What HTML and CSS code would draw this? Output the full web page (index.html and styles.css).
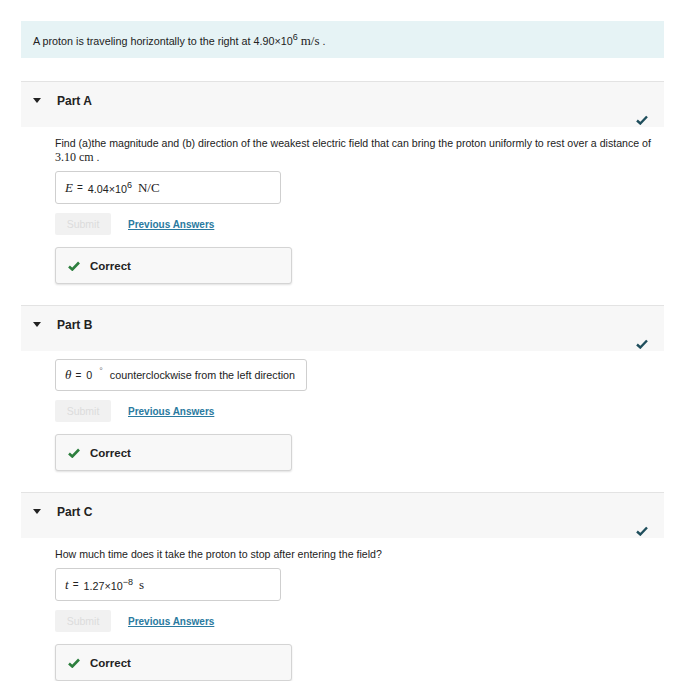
FILE: index.html
```html
<!DOCTYPE html>
<html>
<head>
<meta charset="utf-8">
<link rel="stylesheet" href="styles.css">
</head>
<body>
<div class="page">
  <div class="intro"><span>A proton is traveling horizontally to the right at 4.90×10<sup>6</sup>&nbsp;<span class="m">m/s</span> .</span></div>

  <section class="part">
    <div class="part-head">
      <span class="caret"></span><span class="part-title">Part A</span>
      <svg class="done" viewBox="0 0 12 10" width="12" height="10"><path d="M1 5.5 L4.3 8.5 L11 1.5" fill="none" stroke="#1f4e5c" stroke-width="2.4"/></svg>
    </div>
    <div class="part-body">
      <p class="q">Find (a)the magnitude and (b) direction of the weakest electric field that can bring the proton uniformly to rest over a distance of <span class="m qm">3.10 cm</span> .</p>
      <div class="answer a-short"><span class="mi">E</span><span class="eq">=</span><span>4.04×10<sup>6</sup></span><span class="m unit">N/C</span></div>
      <div class="actions"><span class="submit">Submit</span><a class="prev">Previous Answers</a></div>
      <div class="correct"><svg viewBox="0 0 12 10" width="12" height="10"><path d="M1 5.5 L4.3 8.5 L11 1.5" fill="none" stroke="#2d7f3e" stroke-width="2.6"/></svg><span>Correct</span></div>
    </div>
  </section>

  <section class="part">
    <div class="part-head">
      <span class="caret"></span><span class="part-title">Part B</span>
      <svg class="done" viewBox="0 0 12 10" width="12" height="10"><path d="M1 5.5 L4.3 8.5 L11 1.5" fill="none" stroke="#1f4e5c" stroke-width="2.4"/></svg>
    </div>
    <div class="part-body">
      <div class="answer a-wide"><span class="mi">θ</span><span class="eq">=</span><span>0</span><span class="deg">°</span><span>counterclockwise from the left direction</span></div>
      <div class="actions"><span class="submit">Submit</span><a class="prev">Previous Answers</a></div>
      <div class="correct"><svg viewBox="0 0 12 10" width="12" height="10"><path d="M1 5.5 L4.3 8.5 L11 1.5" fill="none" stroke="#2d7f3e" stroke-width="2.6"/></svg><span>Correct</span></div>
    </div>
  </section>

  <section class="part">
    <div class="part-head">
      <span class="caret"></span><span class="part-title">Part C</span>
      <svg class="done" viewBox="0 0 12 10" width="12" height="10"><path d="M1 5.5 L4.3 8.5 L11 1.5" fill="none" stroke="#1f4e5c" stroke-width="2.4"/></svg>
    </div>
    <div class="part-body">
      <p class="q">How much time does it take the proton to stop after entering the field?</p>
      <div class="answer a-short"><span class="mi">t</span><span class="eq">=</span><span>1.27×10<sup>−8</sup></span><span class="m unit">s</span></div>
      <div class="actions"><span class="submit">Submit</span><a class="prev">Previous Answers</a></div>
      <div class="correct"><svg viewBox="0 0 12 10" width="12" height="10"><path d="M1 5.5 L4.3 8.5 L11 1.5" fill="none" stroke="#2d7f3e" stroke-width="2.6"/></svg><span>Correct</span></div>
    </div>
  </section>
</div>
</body>
</html>
```

FILE: styles.css
```css
html, body {
  margin: 0;
  padding: 0;
  background: #fff;
}
body {
  font-family: "Liberation Sans", Arial, sans-serif;
  font-size: 10.75px;
  color: #222;
}
.page {
  width: 643px;
  margin-left: 21px;
  padding-top: 21px;
}
sup {
  font-size: 9px;
  line-height: 1;
  vertical-align: 5px;
}
.m {
  font-family: "Liberation Serif", "Times New Roman", serif;
  font-size: 13px;
  line-height: 1;
}
.qm {
  font-size: 12px;
}
.mi {
  font-family: "Liberation Serif", "Times New Roman", serif;
  font-style: italic;
  font-size: 13px;
}
.intro {
  height: 37px;
  background: #e6f3f5;
  padding-left: 12px;
  display: flex;
  align-items: center;
  box-sizing: border-box;
}
.part {
  margin-top: 23px;
}
.part + .part {
  margin-top: 21px;
}
.part-head {
  position: relative;
  height: 46px;
  box-sizing: border-box;
  border-top: 1px solid #e3e3e3;
  background: #f7f7f7;
  display: flex;
  align-items: center;
  padding-bottom: 8px;
  padding-left: 12px;
}
.caret {
  width: 0;
  height: 0;
  border-left: 4px solid transparent;
  border-right: 4px solid transparent;
  border-top: 5px solid #222;
  margin-right: 16px;
}
.part-title {
  font-weight: bold;
  font-size: 12px;
}
.done {
  position: absolute;
  right: 16px;
  bottom: 2px;
}
.part-body {
  padding-left: 34px;
}
.q {
  margin: 9px 0 0;
  line-height: 14px;
  font-size: 10.6px;
}
.answer {
  margin-top: 7px;
  height: 33px;
  box-sizing: border-box;
  border: 1px solid #cfcfcf;
  border-radius: 3px;
  display: flex;
  align-items: center;
  padding-left: 9px;
}
.a-short { width: 226px; }
.a-wide { width: 252px; height: 32px; margin-top: 8px; }
.eq {
  margin: 0 5px 0 4px;
  font-size: 10px;
}
.unit {
  margin-left: 6px;
}
.deg {
  font-size: 9px;
  position: relative;
  top: -4px;
  color: #777;
  margin: 0 7px 0 7px;
}
.actions {
  margin-top: 9px;
  height: 22px;
  display: flex;
  align-items: center;
}
.submit {
  width: 56px;
  height: 22px;
  background: #f1f1f1;
  color: #dcdcdc;
  display: flex;
  align-items: center;
  justify-content: center;
  font-size: 10.5px;
  border-radius: 2px;
}
.prev {
  margin-left: 17px;
  color: #2a7aa0;
  font-weight: bold;
  text-decoration: underline;
  font-size: 10px;
}
.correct {
  margin-top: 12px;
  width: 237px;
  height: 37px;
  box-sizing: border-box;
  border: 1px solid #d4d4d4;
  border-radius: 3px;
  background: #f8f8f8;
  box-shadow: 0 1px 2px rgba(0,0,0,0.12);
  display: flex;
  align-items: center;
  padding-left: 12px;
  font-weight: bold;
  font-size: 11.5px;
}
.correct svg {
  margin-right: 10px;
}
```
